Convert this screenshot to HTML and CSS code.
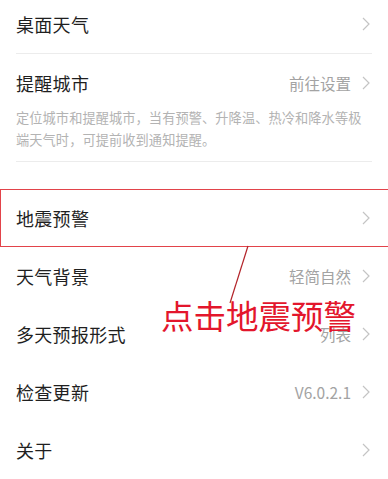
FILE: index.html
```html
<!DOCTYPE html>
<html lang="zh">
<head>
<meta charset="utf-8">
<link rel="stylesheet" href="styles.css">
</head>
<body>
<div class="page">
  <div class="row first">
    <span class="label">桌面天气</span>
    <span class="right"><svg class="chev" viewBox="0 0 8 14"><polyline points="1,1 7,7 1,13"/></svg></span>
  </div>
  <div class="divider"></div>
  <div class="group">
    <div class="row remind">
      <span class="label">提醒城市</span>
      <span class="right"><span class="value">前往设置</span><svg class="chev" viewBox="0 0 8 14"><polyline points="1,1 7,7 1,13"/></svg></span>
    </div>
    <p class="desc">定位城市和提醒城市，当有预警、升降温、热冷和降水等极端天气时，可提前收到通知提醒。</p>
  </div>
  <div class="divider"></div>
  <div class="list">
    <div class="row highlight">
      <span class="label">地震预警</span>
      <span class="right"><svg class="chev" viewBox="0 0 8 14"><polyline points="1,1 7,7 1,13"/></svg></span>
    </div>
    <div class="row">
      <span class="label">天气背景</span>
      <span class="right"><span class="value">轻简自然</span><svg class="chev" viewBox="0 0 8 14"><polyline points="1,1 7,7 1,13"/></svg></span>
    </div>
    <div class="row">
      <span class="label">多天预报形式</span>
      <span class="right"><span class="value">列表</span><svg class="chev" viewBox="0 0 8 14"><polyline points="1,1 7,7 1,13"/></svg></span>
    </div>
    <div class="row">
      <span class="label">检查更新</span>
      <span class="right"><span class="value">V6.0.2.1</span><svg class="chev" viewBox="0 0 8 14"><polyline points="1,1 7,7 1,13"/></svg></span>
    </div>
    <div class="row">
      <span class="label">关于</span>
      <span class="right"><svg class="chev" viewBox="0 0 8 14"><polyline points="1,1 7,7 1,13"/></svg></span>
    </div>
  </div>
  <svg class="pointer" viewBox="0 0 388 479"><line x1="248" y1="246" x2="230" y2="303"/></svg>
  <div class="note">点击地震预警</div>
</div>
</body>
</html>
```
FILE: styles.css
```css
* { box-sizing: border-box; }
html, body { margin: 0; padding: 0; background: #fff; }
body {
  font-family: "Noto Sans CJK SC", "Noto Sans", sans-serif;
  color: #1f1f1f;
}
.page {
  position: relative;
  width: 388px;
  height: 479px;
  overflow: hidden;
}
.row {
  display: flex;
  align-items: center;
  justify-content: space-between;
  height: 58px;
  padding: 0 18px 0 16px;
}
.row.first { height: 48px; margin-bottom: 5px; }
.row.remind { height: 50px; margin-top: 4px; }
.label {
  font-size: 18px;
  letter-spacing: 0.3px;
}
.right {
  display: flex;
  align-items: center;
  gap: 11px;
}
.value {
  font-size: 15.5px;
  color: #a3a3a3;
}
.chev {
  width: 8px;
  height: 14px;
  fill: none;
  stroke: #c4c4c4;
  stroke-width: 1.2;
}
.divider {
  height: 1px;
  margin: 0 16px;
  background: #ececec;
}
.desc {
  margin: -1px 0 0;
  padding: 0 22px 10px 16px;
  font-size: 13.2px;
  line-height: 22px;
  letter-spacing: 0.1px;
  color: #b3b3b3;
}
.list { margin-top: 27px; }
.highlight { position: relative; }
.highlight::after {
  content: "";
  position: absolute;
  left: 0;
  top: 0;
  width: 387px;
  height: 56px;
  border: 1.5px solid #e2434a;
}
.pointer {
  position: absolute;
  left: 0;
  top: 0;
  width: 388px;
  height: 479px;
  fill: none;
  stroke: #b3242a;
  stroke-width: 1.2;
}
.note {
  position: absolute;
  left: 161px;
  top: 292px;
  font-size: 32.5px;
  line-height: 46px;
  color: #e3162c;
  white-space: nowrap;
}
```
